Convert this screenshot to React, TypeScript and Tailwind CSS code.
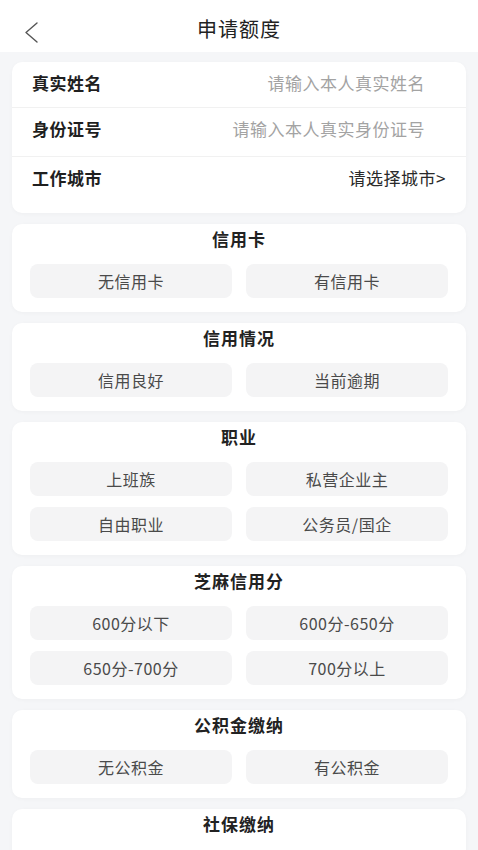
import React from "react";

const font = { fontFamily: '"Noto Sans CJK SC", "Noto Sans", sans-serif' };

function Section({ title, options }: { title: string; options: string[] }) {
  return (
    <div className="mt-[11px] rounded-[10px] bg-white px-[18px] pt-[3px] pb-[14px] shadow-[0_1px_4px_rgba(0,0,0,0.03)]">
      <div className="text-center text-[17px] leading-[24px] font-bold tracking-[1px] text-[#222]">{title}</div>
      {options.length > 0 && (
        <div className="mt-[13px] grid grid-cols-2 gap-x-[14px] gap-y-[11px]">
          {options.map((o) => (
            <div
              key={o}
              className="flex h-[34px] items-center justify-center rounded-[8px] bg-[#f4f4f5] text-[16px] tracking-[0.5px] text-[#4a4a4a]"
            >
              {o}
            </div>
          ))}
        </div>
      )}
      {options.length === 0 && <div className="h-[40px]" />}
    </div>
  );
}

export default function App() {
  return (
    <div className="min-h-[850px] bg-[#f5f6f8]" style={font}>
      <div className="relative flex h-[52px] items-center justify-center bg-white">
        <svg className="absolute left-[22px] top-[20px]" width="20" height="25" viewBox="0 0 20 25">
          <polyline points="15,3 4,12.5 15,22" fill="none" stroke="#555" strokeWidth="1.4" strokeLinecap="round" strokeLinejoin="round" />
        </svg>
        <div className="mt-[6px] text-[20px] tracking-[1px] text-[#222]">申请额度</div>
      </div>
      <div className="px-[12px] pt-[10px]">
        <div className="rounded-[10px] bg-white px-[20px] shadow-[0_1px_4px_rgba(0,0,0,0.03)]">
          <div className="-mx-[20px] flex h-[46px] items-start justify-between border-b border-[#f1f1f1] px-[20px] pt-[9px]">
            <span className="text-[17px] leading-[24px] font-semibold tracking-[0.5px] text-[#1f1f1f]">真实姓名</span>
            <span className="mr-[21px] text-[17px] leading-[24px] tracking-[0.5px] text-[#a3a3a3]">请输入本人真实姓名</span>
          </div>
          <div className="-mx-[20px] flex h-[49px] items-start justify-between border-b border-[#f1f1f1] px-[20px] pt-[9px]">
            <span className="text-[17px] leading-[24px] font-semibold tracking-[0.5px] text-[#1f1f1f]">身份证号</span>
            <span className="mr-[21px] text-[17px] leading-[24px] tracking-[0.5px] text-[#a3a3a3]">请输入本人真实身份证号</span>
          </div>
          <div className="flex h-[56px] items-start justify-between pt-[9px]">
            <span className="text-[17px] leading-[24px] font-semibold tracking-[0.5px] text-[#1f1f1f]">工作城市</span>
            <span className="text-[17px] leading-[24px] tracking-[0.5px] text-[#2a2a2a]">请选择城市&gt;</span>
          </div>
        </div>
        <Section title="信用卡" options={["无信用卡", "有信用卡"]} />
        <Section title="信用情况" options={["信用良好", "当前逾期"]} />
        <Section title="职业" options={["上班族", "私营企业主", "自由职业", "公务员/国企"]} />
        <Section title="芝麻信用分" options={["600分以下", "600分-650分", "650分-700分", "700分以上"]} />
        <Section title="公积金缴纳" options={["无公积金", "有公积金"]} />
        <Section title="社保缴纳" options={[]} />
      </div>
    </div>
  );
}
